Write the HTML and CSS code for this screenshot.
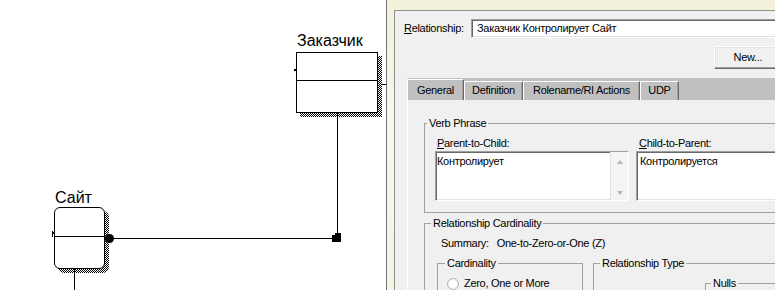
FILE: index.html
```html
<!DOCTYPE html>
<html lang="ru">
<head>
  <meta charset="UTF-8" />
  <title>Relationship Editor</title>
  <link rel="stylesheet" href="styles.css">
</head>
<body>
  <div class="canvas">
    <svg class="links" width="386" height="290" viewBox="0 0 386 290" shape-rendering="crispEdges">
      <path d="M382 84.5H386" stroke="#000" />
      <path d="M337.5 113V238" stroke="#000" />
      <path d="M110 238.5H333" stroke="#000" />
      <rect x="332" y="233" width="9" height="9" fill="#000" />
      <rect x="332" y="233" width="3" height="2" fill="#fff" />
      <circle cx="109.5" cy="238.5" r="4.5" fill="#000" shape-rendering="auto" />
      <path d="M74.5 268V290" stroke="#000" />
      <rect x="294" y="69" width="2" height="2" fill="#000" />
      <path d="M52.5 231V237M53 234L55 231" stroke="#000" />
    </svg>

    <div class="node node-customer">
      <div class="node-name">Заказчик</div>
      <div class="entity"><div class="entity-key"></div></div>
    </div>

    <div class="node node-site">
      <div class="node-name">Сайт</div>
      <div class="entity"><div class="entity-key"></div></div>
    </div>
  </div>

  <div class="window">
    <div class="client">
      <div class="name-row">
        <label class="name-label"><u>R</u>elationship:</label>
        <div class="field name-field">Заказчик Контролирует Сайт</div>
      </div>

      <div class="button-row">
        <button class="btn">New...</button>
      </div>

      <div class="tabs">
        <div class="tab-strip">
          <div class="tab tab-general active">General</div>
          <div class="tab tab-definition">Definition</div>
          <div class="tab tab-rolename">Rolename/RI Actions</div>
          <div class="tab tab-udp">UDP</div>
        </div>

        <div class="tab-page">
          <fieldset class="group verb-group">
            <legend>Verb Phrase</legend>
            <div class="verb-grid">
              <div>
                <div class="field-label"><u>P</u>arent-to-Child:</div>
                <div class="field memo">
                  <div class="memo-text">Контролирует</div>
                  <div class="scrollbar">
                    <span class="arrow-up"></span>
                    <span class="arrow-down"></span>
                  </div>
                </div>
              </div>
              <div>
                <div class="field-label child-label"><u>C</u>hild-to-Parent:</div>
                <div class="field memo">
                  <div class="memo-text child-text">Контролируется</div>
                </div>
              </div>
            </div>
          </fieldset>

          <fieldset class="group card-group">
            <legend>Relationship Cardinality</legend>
            <div class="summary">Summary:<span class="summary-value">One-to-Zero-or-One (Z)</span></div>
            <div class="card-row">
              <fieldset class="group cardinality">
                <legend>Cardinality</legend>
                <div class="radio-row"><span class="radio"></span>Zero, One or More</div>
              </fieldset>
              <fieldset class="group rel-type">
                <legend>Relationship Type</legend>
                <fieldset class="group nulls">
                  <legend>Nulls</legend>
                </fieldset>
              </fieldset>
            </div>
          </fieldset>
        </div>
      </div>
    </div>
  </div>
</body>
</html>
```

FILE: styles.css
```css
* {
  box-sizing: border-box;
}

body {
  margin: 0;
  width: 775px;
  height: 290px;
  overflow: hidden;
  display: flex;
  font-family: "Liberation Sans", Arial, sans-serif;
  font-size: 11px;
  line-height: 13px;
  letter-spacing: -0.3px;
  color: #000;
  background: #fff;
}

/* diagram */

.canvas {
  position: relative;
  z-index: 0;
  width: 386px;
  height: 290px;
  flex: none;
  background: #fff;
}

.links {
  position: absolute;
  left: 0;
  top: 0;
}

.node {
  position: absolute;
}

.node-customer {
  left: 296px;
  top: 32px;
}

.node-site {
  left: 54px;
  top: 189px;
}

.node-name {
  height: 18px;
  padding-left: 1px;
  font-size: 16px;
  line-height: 18px;
  letter-spacing: 0;
  white-space: nowrap;
}

.node-customer .node-name {
  margin-bottom: 2px;
}

.entity {
  position: relative;
  width: 82px;
  height: 61px;
  border: 1px solid #000;
  background: #fff;
}

.entity::before {
  content: "";
  position: absolute;
  z-index: -1;
  inset: 3px -5px -5px 3px;
  background: repeating-conic-gradient(#000 0 25%, #fff 0 50%) 0 0 / 2px 2px;
}

.entity-key {
  height: 28px;
  border-bottom: 1px solid #000;
}

.node-site .entity {
  width: 51px;
  height: 62px;
  border-radius: 6px;
}

.node-site .entity::before {
  border-radius: 6px;
}

.node-site .entity-key {
  height: 29px;
}

/* dialog window */

.window {
  flex: 1;
  min-width: 0;
  overflow: hidden;
  border-left: 1px solid #6f6f6f;
  padding: 10px 0 0 7px;
  background: linear-gradient(180deg, #f3f1da, #f8f7ea 40%, #f6f5e4);
}

.client {
  width: 402px;
  height: 300px;
  background: #f0f0f0;
  border-top: 1px solid #8f8f8f;
  border-left: 1px solid #8f8f8f;
}

.name-row {
  display: flex;
  align-items: center;
  height: 19px;
  margin-top: 8px;
  padding-left: 9px;
}

.name-label {
  width: 67px;
  flex: none;
}

.field {
  background: #fff;
  border: 1px solid;
  border-color: #a0a0a0 #fff #fff #a0a0a0;
  box-shadow: inset 1px 1px #696969, inset -1px -1px #e3e3e3;
}

.name-field {
  flex: 1;
  height: 19px;
  margin-right: 14px;
  padding-left: 5px;
  line-height: 17px;
  white-space: nowrap;
}

.button-row {
  display: flex;
  justify-content: flex-end;
  margin-top: 8px;
  padding-right: 14px;
}

.btn {
  width: 68px;
  height: 23px;
  padding: 0;
  font: inherit;
  letter-spacing: inherit;
  color: #000;
  background: #f0f0f0;
  border: 1px solid;
  border-color: #fff #696969 #696969 #fff;
  box-shadow: inset -1px -1px #a0a0a0, inset 1px 1px #e3e3e3;
}

/* tabs */

.tabs {
  margin: 9px 0 0 12px;
}

.tab-strip {
  display: flex;
  align-items: flex-end;
  height: 22px;
  background: #c0c0c0;
}

.tab {
  height: 19px;
  line-height: 17px;
  text-align: center;
  white-space: nowrap;
  border-top: 1px solid #fff;
  border-left: 1px solid #fff;
  border-right: 1px solid #696969;
  box-shadow: inset -1px 0 #a0a0a0;
}

.tab.active {
  height: 21px;
  padding-top: 2px;
}

.tab-general { width: 57px; }
.tab-definition { width: 59px; }
.tab-rolename { width: 117px; }
.tab-udp { width: 39px; }

.tab-page {
  height: 200px;
  border-left: 1px solid #fff;
  padding: 17px 0 0 16px;
}

/* group boxes */

.group {
  margin: 0;
  padding: 0;
  min-width: 0;
  border: 1px solid #a0a0a0;
}

.group legend {
  padding: 0 2px;
  line-height: 13px;
}

.verb-group {
  width: 390px;
}

.verb-group legend {
  margin-left: 2px;
}

.verb-grid {
  display: grid;
  grid-template-columns: 194px 1fr;
  column-gap: 7px;
  padding: 7px 0 11px 10px;
}

.field-label {
  padding-left: 2px;
  margin-bottom: 1px;
  white-space: nowrap;
}

.child-label {
  padding-left: 3px;
}

.memo {
  display: flex;
  height: 50px;
}

.memo-text {
  flex: 1;
  padding: 3px 0 0 1px;
}

.child-text {
  padding-left: 3px;
}

.scrollbar {
  width: 18px;
  flex: none;
  display: flex;
  flex-direction: column;
  align-items: center;
  justify-content: space-between;
  padding: 8px 0 5px;
  background: #f4f4f4;
  border-left: 1px solid #e2e2e2;
}

.arrow-up,
.arrow-down {
  width: 0;
  height: 0;
  border-left: 3px solid transparent;
  border-right: 3px solid transparent;
}

.arrow-up {
  border-bottom: 4px solid #b4b4b4;
}

.arrow-down {
  border-top: 4px solid #b4b4b4;
}

.card-group {
  width: 390px;
  margin-top: 4px;
}

.card-group legend {
  margin-left: 6px;
}

.summary {
  padding: 7px 0 0 16px;
  white-space: nowrap;
}

.summary-value {
  margin-left: 8px;
}

.card-row {
  display: flex;
  align-items: flex-start;
  margin: 7px 0 0 12px;
}

.cardinality {
  width: 146px;
  height: 60px;
  flex: none;
}

.cardinality legend {
  margin-left: 7px;
}

.radio-row {
  display: flex;
  align-items: center;
  gap: 5px;
  padding: 7px 0 0 9px;
  white-space: nowrap;
}

.radio {
  width: 12px;
  height: 12px;
  flex: none;
  border: 1px solid #b5b5b5;
  border-radius: 50%;
  background: radial-gradient(#fff 45%, #e4e4e4);
}

.rel-type {
  flex: 1;
  height: 60px;
  margin-left: 10px;
}

.rel-type legend {
  margin-left: 6px;
}

.nulls {
  width: 120px;
  height: 40px;
  margin: 7px 0 0 111px;
}

.nulls legend {
  margin-left: 5px;
}
```
